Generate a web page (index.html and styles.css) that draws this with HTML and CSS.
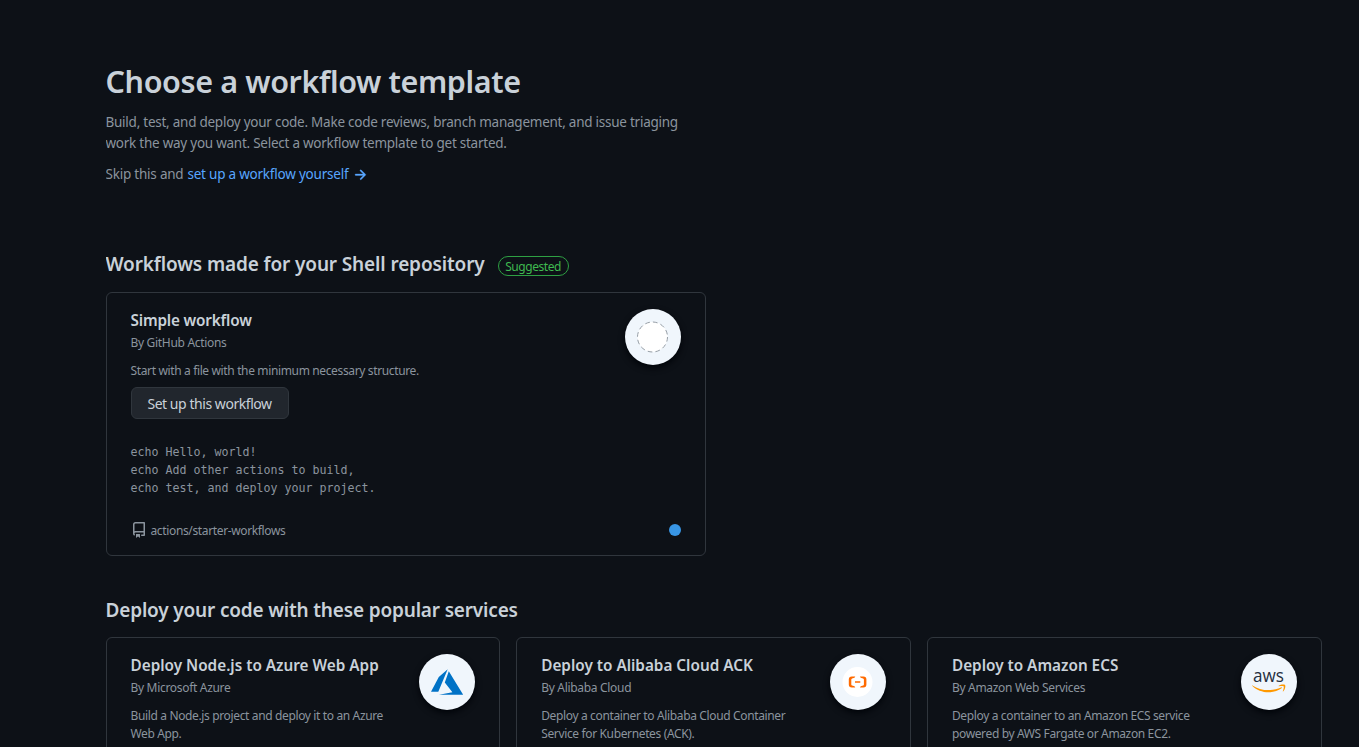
FILE: index.html
```html
<!DOCTYPE html>
<html lang="en">
<head>
<meta charset="utf-8">
<title>Choose a workflow template</title>
<link rel="stylesheet" href="styles.css">
</head>
<body>
<main class="page">
  <header class="intro">
    <h1 class="page-title">Choose a workflow template</h1>
    <p class="lead">Build, test, and deploy your code. Make code reviews, branch management, and issue triaging<br>work the way you want. Select a workflow template to get started.</p>
    <p class="skip"><span class="skip-text">Skip this and</span> <a class="skip-link" href="#">set up a workflow yourself</a>
      <svg class="arrow" width="16" height="16" viewBox="0 0 16 16" fill="currentColor" stroke="currentColor" stroke-width=".3"><path d="M8.22 2.97a.75.75 0 011.06 0l4.25 4.25a.75.75 0 010 1.06l-4.25 4.25a.75.75 0 01-1.06-1.06l2.97-2.97H3.75a.75.75 0 010-1.5h7.44L8.22 4.03a.75.75 0 010-1.06z"/></svg>
    </p>
  </header>

  <section class="suggested">
    <div class="section-head">
      <h2 class="section-title t-shell">Workflows made for your Shell repository</h2>
      <span class="badge">Suggested</span>
    </div>
    <article class="card card-wide">
      <div class="card-top">
        <div class="card-text">
          <h3 class="card-title t-simple">Simple workflow</h3>
          <p class="by">By GitHub Actions</p>
          <p class="desc">Start with a file with the minimum necessary structure.</p>
        </div>
        <div class="logo">
          <svg width="32" height="32" viewBox="0 0 32 32"><circle cx="15.5" cy="16" r="15" fill="#fff" stroke="#959da5" stroke-width="1" stroke-dasharray="4.7 3.15"/></svg>
        </div>
      </div>
      <a class="button" href="#">Set up this workflow</a>
      <pre class="code">echo Hello, world!
echo Add other actions to build,
echo test, and deploy your project.</pre>
      <div class="card-foot">
        <svg class="repo" width="16" height="16" viewBox="0 0 16 16" fill="currentColor"><path fill-rule="evenodd" d="M2 2.500A2.500 2.500 0 014.500 0h8.750a.75.75 0 01.75.75v12.500a.75.75 0 01-.75.75h-2.500a.75.75 0 110-1.500h1.750v-2h-8a1 1 0 00-.714 1.700.75.75 0 01-1.072 1.050A2.495 2.495 0 012 11.500v-9zm10.500-1V9h-8c-.356 0-.694.074-1 .208V2.500a1 1 0 011-1h8zM5 12.250v3.250a.25.25 0 00.4.2l1.450-1.087a.25.25 0 01.3 0L8.600 15.700a.25.25 0 00.4-.2v-3.250a.25.25 0 00-.25-.25h-3.500a.25.25 0 00-.25.25z"/></svg>
        <span class="repo-name">actions/starter-workflows</span>
        <span class="dot"></span>
      </div>
    </article>
  </section>

  <section class="services">
    <h2 class="section-title t-deploy">Deploy your code with these popular services</h2>
    <div class="grid">
      <article class="card">
        <div class="card-top">
          <div class="card-text">
            <h3 class="card-title">Deploy Node.js to Azure Web App</h3>
            <p class="by">By Microsoft Azure</p>
            <p class="desc">Build a Node.js project and deploy it to an Azure<br>Web App.</p>
          </div>
          <div class="logo">
            <svg width="32" height="32" viewBox="0 0 32 32"><path fill="#0072c6" d="M16.700 3.200 7.800 11 0 25.700h7.300zM17.800 5.200 13.800 16.500 21.400 26.200 8 28.800h24.200z"/></svg>
          </div>
        </div>
      </article>
      <article class="card">
        <div class="card-top">
          <div class="card-text">
            <h3 class="card-title">Deploy to Alibaba Cloud ACK</h3>
            <p class="by">By Alibaba Cloud</p>
            <p class="desc">Deploy a container to Alibaba Cloud Container<br>Service for Kubernetes (ACK).</p>
          </div>
          <div class="logo">
            <svg width="32" height="32" viewBox="0 0 32 32"><circle cx="15.5" cy="16" r="15" fill="#fff"/><g fill="#ff6a00"><path d="M13.3 10.5H9.8A3 3 0 0 0 6.8 13.5v5A3 3 0 0 0 9.8 21.5h3.5l-.8-1.3-2.4-.7a1.200 1.200 0 0 1-.8-1.100v-4.800a1.200 1.200 0 0 1 .8-1.100l2.400-.7zM17.900 10.500h3.500a3 3 0 0 1 3 3v5a3 3 0 0 1-3 3h-3.500l.8-1.300 2.400-.7a1.200 1.200 0 0 0 .8-1.100v-4.800a1.200 1.200 0 0 0-.8-1.100l-2.400-.7zM13 15.200h5.300v1.500H13z"/></g></svg>
          </div>
        </div>
      </article>
      <article class="card">
        <div class="card-top">
          <div class="card-text">
            <h3 class="card-title">Deploy to Amazon ECS</h3>
            <p class="by">By Amazon Web Services</p>
            <p class="desc">Deploy a container to an Amazon ECS service<br>powered by AWS Fargate or Amazon EC2.</p>
          </div>
          <div class="logo">
            <svg class="aws-logo" width="34" height="40" viewBox="0 -4 34 40"><text class="aws" x="1" y="16.2" textLength="31" lengthAdjust="spacingAndGlyphs">aws</text><g fill="#ff9900"><path d="M.5 19.400c4.600 3 10 4.700 15.900 4.700 4.300 0 8.700-1 12.600-2.700.8-.3 1.300.4.600.9-3.500 2.600-8.400 4-13 4C10.300 26.300 4.600 24 .4 20c-.4-.4-.3-.8.1-.6z"/><path d="M26.700 19.800c2-1.400 5.500-1.400 6.300-.8.9.7.1 4.500-1.700 6.300-.3.3-.6.2-.5-.2.6-1.400 1.300-4.100.9-4.700-.4-.5-3-.3-4.700-.1-.4.1-.6-.2-.3-.5z"/></g></svg>
          </div>
        </div>
      </article>
    </div>
  </section>
</main>
</body>
</html>
```

FILE: styles.css
```css
* { box-sizing: border-box; margin: 0; }
html, body { height: 100%; }
body {
  overflow: hidden;
  background: #0d1117;
  color: #8b949e;
  font: 14px/21px "Noto Sans", "Open Sans", sans-serif;
}
a { text-decoration: none; }
.page { width: 1216.2px; height: 100%; overflow: hidden; margin-left: 105.5px; padding-top: 57px; }
.page-title { font-size: 30.5px; line-height: 48px; font-weight: 600; color: #c9d1d9; white-space: nowrap; letter-spacing: -.38px; }
.lead { margin-top: 7px; font-size: 13.5px; letter-spacing: -.25px; white-space: nowrap; }
.skip { display: flex; align-items: center; gap: 4px; margin-top: 10px; font-size: 13.5px; letter-spacing: -.22px; white-space: nowrap; }
.skip-link, .arrow { color: #58a6ff; }
.suggested { margin-top: 64px; }
.section-head { display: flex; align-items: center; gap: 13px; }
.section-title { font-size: 19px; line-height: 30px; font-weight: 600; color: #c9d1d9; white-space: nowrap; }
.t-shell { letter-spacing: -.13px; }
.t-deploy { letter-spacing: -.17px; }
.badge {
  width: 71px; height: 20px; margin-top: 4px;
  border: 1px solid #2ea043; border-radius: 10px;
  color: #3fb950; font-size: 12px; line-height: 19px; letter-spacing: -.45px; text-align: center;
}
.card { min-width: 0; padding: 16px 24px; border: 1px solid #30363d; border-radius: 6px; }
.card-wide { width: 600px; height: 264px; margin-top: 13px; }
.card-top { display: flex; justify-content: space-between; }
.card-text { white-space: nowrap; }
.card-title { font-size: 15.3px; line-height: 23px; font-weight: 600; color: #c9d1d9; }
.t-simple { letter-spacing: -.18px; }
.by { font-size: 12px; line-height: 18px; margin-top: 2px; letter-spacing: -.31px; }
.desc { font-size: 12px; line-height: 18px; margin-top: 10px; letter-spacing: -.36px; }
.logo {
  display: flex; align-items: center; justify-content: center; flex: none;
  width: 56px; height: 56px; border-radius: 50%;
  background: #f0f6fc; box-shadow: 0 3px 6px #010409;
}
.aws { font: 500 17.5px "Open Sans", sans-serif; fill: #252f3e; }
.button {
  display: flex; align-items: center; justify-content: center;
  width: 158px; height: 32px; margin-top: 7px;
  border: 1px solid #30363d; border-radius: 6px;
  background: #21262d; color: #c9d1d9; font-size: 14px; letter-spacing: -.45px; white-space: nowrap;
}
.code { margin-top: 24px; font: 11.63px/18px "DejaVu Sans Mono", monospace; }
.card-foot { display: flex; align-items: center; gap: 4px; height: 18px; margin-top: 24px; font-size: 12px; letter-spacing: -.36px; }
.dot { width: 12px; height: 12px; margin-left: auto; border-radius: 50%; background: #3896e5; }
.services { margin-top: 39px; }
.grid { display: grid; grid-template-columns: repeat(3, 1fr); gap: 16px; margin-top: 12px; }
.grid .card { height: 264px; }
```
